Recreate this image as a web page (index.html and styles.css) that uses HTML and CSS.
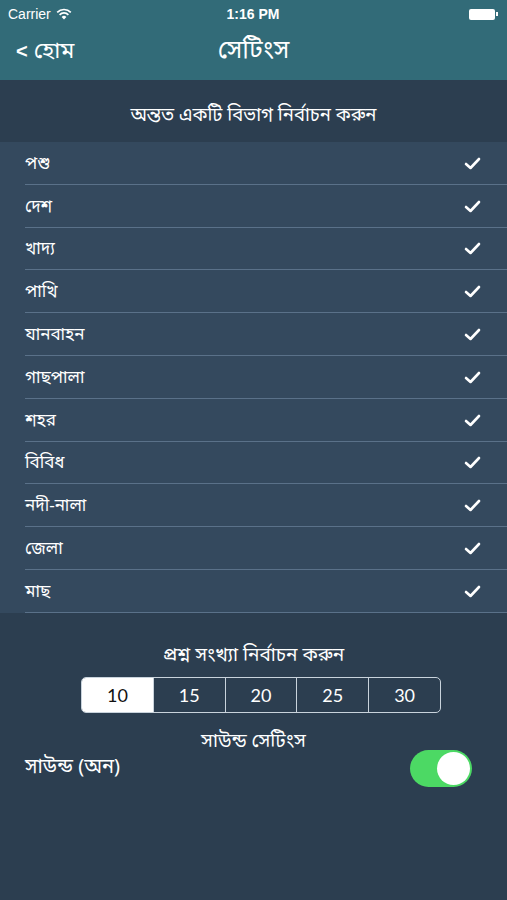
FILE: index.html
```html
<!DOCTYPE html>
<html lang="bn">
<head>
    <meta charset="UTF-8">
    <meta name="viewport" content="width=device-width, initial-scale=1.0">
    <title>সেটিংস</title>
    <link rel="stylesheet" href="styles.css">
</head>
<body>

    <div class="topbar">
        <div class="status">
            <div class="status-left">
                Carrier
                <svg class="wifi" width="16" height="12" viewBox="0 0 16 12">
                    <path d="M8 11.5 L5.6 8.9 A3.4 3.4 0 0 1 10.4 8.9 Z" fill="#fff"/>
                    <path d="M3.6 6.8 A6.2 6.2 0 0 1 12.4 6.8" stroke="#fff" stroke-width="1.7" fill="none"/>
                    <path d="M1.2 4.3 A9.6 9.6 0 0 1 14.8 4.3" stroke="#fff" stroke-width="1.7" fill="none"/>
                </svg>
            </div>
            <div class="status-time">1:16 PM</div>
            <div class="status-right">
                <span class="battery"></span><span class="battery-tip"></span>
            </div>
        </div>
        <div class="nav">
            <a class="back" href="#"><span class="back-arrow">&lt;</span> হোম</a>
            <div class="nav-title">সেটিংস</div>
        </div>
    </div>

    <div class="section-title">অন্তত একটি বিভাগ নির্বাচন করুন</div>

    <ul class="list">
        <li>পশু <svg class="check" width="17" height="13" viewBox="0 0 17 13"><path d="M2 7 L6.5 11 L15 2" /></svg></li>
        <li>দেশ <svg class="check" width="17" height="13" viewBox="0 0 17 13"><path d="M2 7 L6.5 11 L15 2" /></svg></li>
        <li>খাদ্য <svg class="check" width="17" height="13" viewBox="0 0 17 13"><path d="M2 7 L6.5 11 L15 2" /></svg></li>
        <li>পাখি <svg class="check" width="17" height="13" viewBox="0 0 17 13"><path d="M2 7 L6.5 11 L15 2" /></svg></li>
        <li>যানবাহন <svg class="check" width="17" height="13" viewBox="0 0 17 13"><path d="M2 7 L6.5 11 L15 2" /></svg></li>
        <li>গাছপালা <svg class="check" width="17" height="13" viewBox="0 0 17 13"><path d="M2 7 L6.5 11 L15 2" /></svg></li>
        <li>শহর <svg class="check" width="17" height="13" viewBox="0 0 17 13"><path d="M2 7 L6.5 11 L15 2" /></svg></li>
        <li>বিবিধ <svg class="check" width="17" height="13" viewBox="0 0 17 13"><path d="M2 7 L6.5 11 L15 2" /></svg></li>
        <li>নদী-নালা <svg class="check" width="17" height="13" viewBox="0 0 17 13"><path d="M2 7 L6.5 11 L15 2" /></svg></li>
        <li>জেলা <svg class="check" width="17" height="13" viewBox="0 0 17 13"><path d="M2 7 L6.5 11 L15 2" /></svg></li>
        <li>মাছ <svg class="check" width="17" height="13" viewBox="0 0 17 13"><path d="M2 7 L6.5 11 L15 2" /></svg></li>
    </ul>

    <div class="bottom">
        <div class="sub-title">প্রশ্ন সংখ্যা নির্বাচন করুন</div>
        <div class="segments">
            <div class="seg active">10</div>
            <div class="seg">15</div>
            <div class="seg">20</div>
            <div class="seg">25</div>
            <div class="seg">30</div>
        </div>
        <div class="sub-title sound-title">সাউন্ড সেটিংস</div>
        <div class="sound-row">
            <span>সাউন্ড (অন)</span>
            <div class="toggle"><div class="knob"></div></div>
        </div>
    </div>

</body>
</html>
```

FILE: styles.css
```css
body {
    margin: 0;
    width: 507px;
    height: 900px;
    background-color: #2c3e50;
    color: #fff;
    font-family: "Noto Sans Bengali", "Noto Sans", sans-serif;
    overflow: hidden;
}
.topbar {
    background-color: #326b78;
    height: 80px;
}
.status {
    height: 28px;
    display: flex;
    align-items: center;
    justify-content: space-between;
    padding: 0 9px 0 8px;
    font-family: "Liberation Sans", Arial, sans-serif;
    font-size: 14px;
}
.status-left {
    display: flex;
    align-items: center;
    gap: 5px;
    width: 100px;
}
.status-time {
    font-weight: bold;
    font-size: 14px;
}
.status-right {
    width: 100px;
    display: flex;
    justify-content: flex-end;
    align-items: center;
}
.battery {
    width: 26px;
    height: 11px;
    background: #fff;
    border-radius: 2px;
}
.battery-tip {
    width: 2px;
    height: 4px;
    background: #fff;
    margin-left: 1px;
}
.nav {
    height: 52px;
    display: flex;
    align-items: center;
    justify-content: center;
    position: relative;
}
.back {
    position: absolute;
    left: 16px;
    top: 9px;
    color: #fff;
    text-decoration: none;
    font-size: 23px;
}
.back-arrow {
    font-family: "Liberation Sans", sans-serif;
    font-weight: bold;
    font-size: 20px;
}
.nav-title {
    font-size: 25px;
    margin-top: -6px;
}
.section-title {
    height: 62px;
    padding-top: 10px;
    box-sizing: border-box;
    display: flex;
    align-items: center;
    justify-content: center;
    font-size: 18.5px;
}
.list {
    list-style: none;
    margin: 0;
    padding: 0 0 0 25px;
    background-color: #34495e;
}
.list li {
    height: 38.8px;
    padding-top: 3px;
    border-bottom: 1px solid #5a7189;
    display: flex;
    align-items: center;
    justify-content: space-between;
    padding-right: 26px;
    font-size: 17px;
    line-height: 1;
}
.check {
    fill: none;
    stroke: #fff;
    stroke-width: 2.6;
    stroke-linecap: round;
    stroke-linejoin: round;
    margin-top: -2px;
}
.bottom {
    padding-top: 31px;
}
.sub-title {
    text-align: center;
    font-size: 19px;
    height: 28px;
}
.segments {
    display: flex;
    width: 358px;
    height: 34px;
    margin: 5px auto 0 81px;
    border: 1px solid #c9d3dc;
    border-radius: 5px;
    overflow: hidden;
}
.seg {
    flex: 1;
    display: flex;
    align-items: center;
    justify-content: center;
    border-left: 1px solid #c9d3dc;
    font-family: "Lato", sans-serif;
    font-size: 18px;
}
.seg:first-child {
    border-left: none;
}
.seg.active {
    background: #fff;
    color: #111;
}
.sound-title {
    margin-top: 17px;
}
.sound-row {
    display: flex;
    justify-content: space-between;
    align-items: center;
    padding: 0 35px 0 25px;
    font-size: 20px;
    margin-top: -8px;
}
.toggle {
    width: 62px;
    height: 37px;
    border-radius: 19px;
    background: #4cd964;
    position: relative;
}
.knob {
    position: absolute;
    right: 2px;
    top: 2px;
    width: 33px;
    height: 33px;
    border-radius: 50%;
    background: #fff;
}
```
